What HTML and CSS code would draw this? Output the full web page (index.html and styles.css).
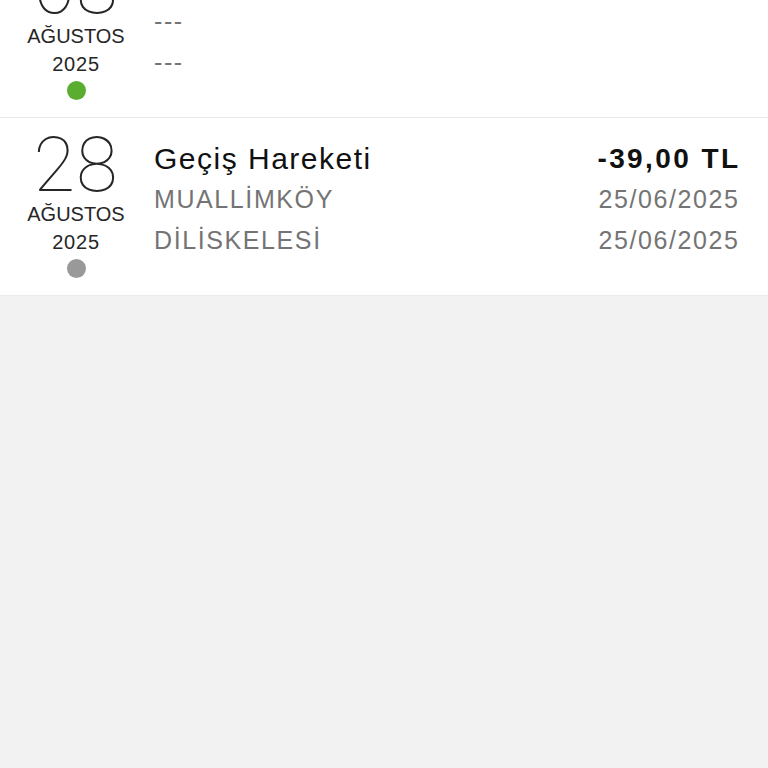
FILE: index.html
```html
<!DOCTYPE html>
<html lang="tr">
<head>
  <meta charset="UTF-8" />
  <meta name="viewport" content="width=device-width, initial-scale=1.0" />
  <title>Geçiş Hareketleri</title>
  <link rel="stylesheet" href="styles.css">
</head>
<body>
  <div class="list">
    <div class="item">
      <div class="date">
        <div class="day">08</div>
        <div class="month">AĞUSTOS</div>
        <div class="year">2025</div>
        <span class="dot green"></span>
      </div>
      <div class="info">
        <div class="row">
          <span class="title">---</span>
          <span class="amount"></span>
        </div>
        <div class="row">
          <span class="sub">---</span>
        </div>
        <div class="row">
          <span class="sub">---</span>
        </div>
      </div>
    </div>

    <div class="item">
      <div class="date">
        <div class="day">28</div>
        <div class="month">AĞUSTOS</div>
        <div class="year">2025</div>
        <span class="dot grey"></span>
      </div>
      <div class="info">
        <div class="row">
          <span class="title">Geçiş Hareketi</span>
          <span class="amount">-39,00 TL</span>
        </div>
        <div class="row">
          <span class="sub">MUALLİMKÖY</span>
          <span class="sub right">25/06/2025</span>
        </div>
        <div class="row">
          <span class="sub">DİLİSKELESİ</span>
          <span class="sub right">25/06/2025</span>
        </div>
      </div>
    </div>
  </div>
</body>
</html>
```

FILE: styles.css
```css
body {
  margin: 0;
  background: #f2f2f2;
  font-family: "Liberation Sans", Arial, sans-serif;
  color: #111;
}
.list {
  margin-top: -60px;
}
.item {
  display: flex;
  background: #fff;
  border-bottom: 1px solid #ebebeb;
  height: 177px;
}
.date {
  width: 152px;
  padding-top: 12px;
  text-align: center;
  color: #262626;
}
.day {
  font-family: Roboto, "Liberation Sans", sans-serif;
  font-weight: 100;
  font-size: 76px;
  line-height: 70px;
  letter-spacing: 1px;
}
.month, .year {
  font-size: 20px;
  line-height: 28px;
}
.year {
  letter-spacing: 0.8px;
}
.dot {
  display: inline-block;
  width: 19px;
  height: 19px;
  border-radius: 50%;
  margin-top: 3px;
}
.dot.green {
  background: #5aad2e;
}
.dot.grey {
  background: #999;
}
.info {
  flex: 1;
  padding: 20px 30px 0 2px;
}
.row {
  display: flex;
  justify-content: space-between;
  line-height: 41px;
}
.title {
  font-size: 30px;
  letter-spacing: 1.5px;
  color: #111;
}
.amount {
  font-size: 28px;
  font-weight: bold;
  letter-spacing: 2.4px;
  margin-right: -2.4px;
  color: #111;
}
.sub {
  font-size: 25px;
  letter-spacing: 1.6px;
  color: #747474;
}
.sub.right {
  margin-right: -1.6px;
}
```
